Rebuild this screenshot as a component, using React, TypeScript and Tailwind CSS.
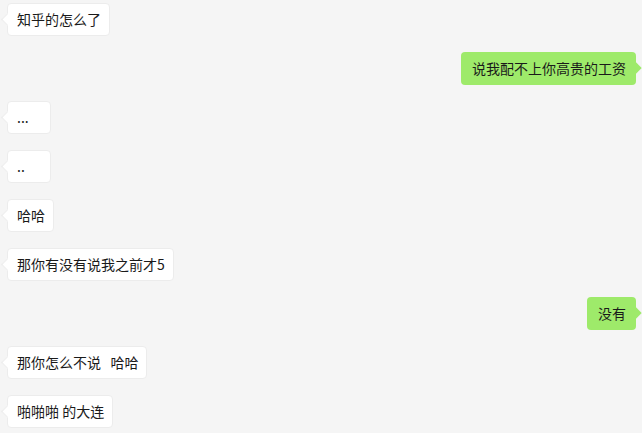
import React from "react";

type Msg = { text: string; mine?: boolean };

const messages: Msg[] = [
  { text: "知乎的怎么了" },
  { text: "说我配不上你高贵的工资", mine: true },
  { text: "..." },
  { text: ".." },
  { text: "哈哈" },
  { text: "那你有没有说我之前才5" },
  { text: "没有", mine: true },
  { text: "那你怎么不说   哈哈" },
  { text: "啪啪啪 的大连" },
];

function Bubble({ text, mine }: Msg) {
  if (mine) {
    return (
      <div className="flex justify-end pr-[6px]">
        <div className="relative flex h-[33px] items-center rounded-[4px] bg-[#9eea6a] pl-[11px] pr-[10px] text-[14px] text-[#1a1a1a]">
          <span className="relative z-10 whitespace-pre">{text}</span>
          <span className="absolute right-[-4px] top-[12px] h-[8px] w-[8px] rotate-45 bg-[#9eea6a]" />
        </div>
      </div>
    );
  }
  return (
    <div className="flex justify-start pl-[7px]">
      <div className="relative flex h-[33px] min-w-[44px] items-center rounded-[4px] border border-[#ececec] bg-white pl-[9px] pr-[8px] text-[14px] text-[#1a1a1a]">
        <span className="relative z-10 whitespace-pre">{text}</span>
        <span className="absolute left-[-5px] top-[11px] h-[9px] w-[9px] rotate-45 border-b border-l border-[#ececec] bg-white" />
      </div>
    </div>
  );
}

export default function App() {
  return (
    <div
      className="flex h-[433px] w-[642px] flex-col gap-[16px] overflow-hidden bg-[#f5f5f5] pt-[3px]"
      style={{ fontFamily: '"Noto Sans CJK SC", "Noto Sans", sans-serif' }}
    >
      {messages.map((m, i) => (
        <Bubble key={i} {...m} />
      ))}
    </div>
  );
}
